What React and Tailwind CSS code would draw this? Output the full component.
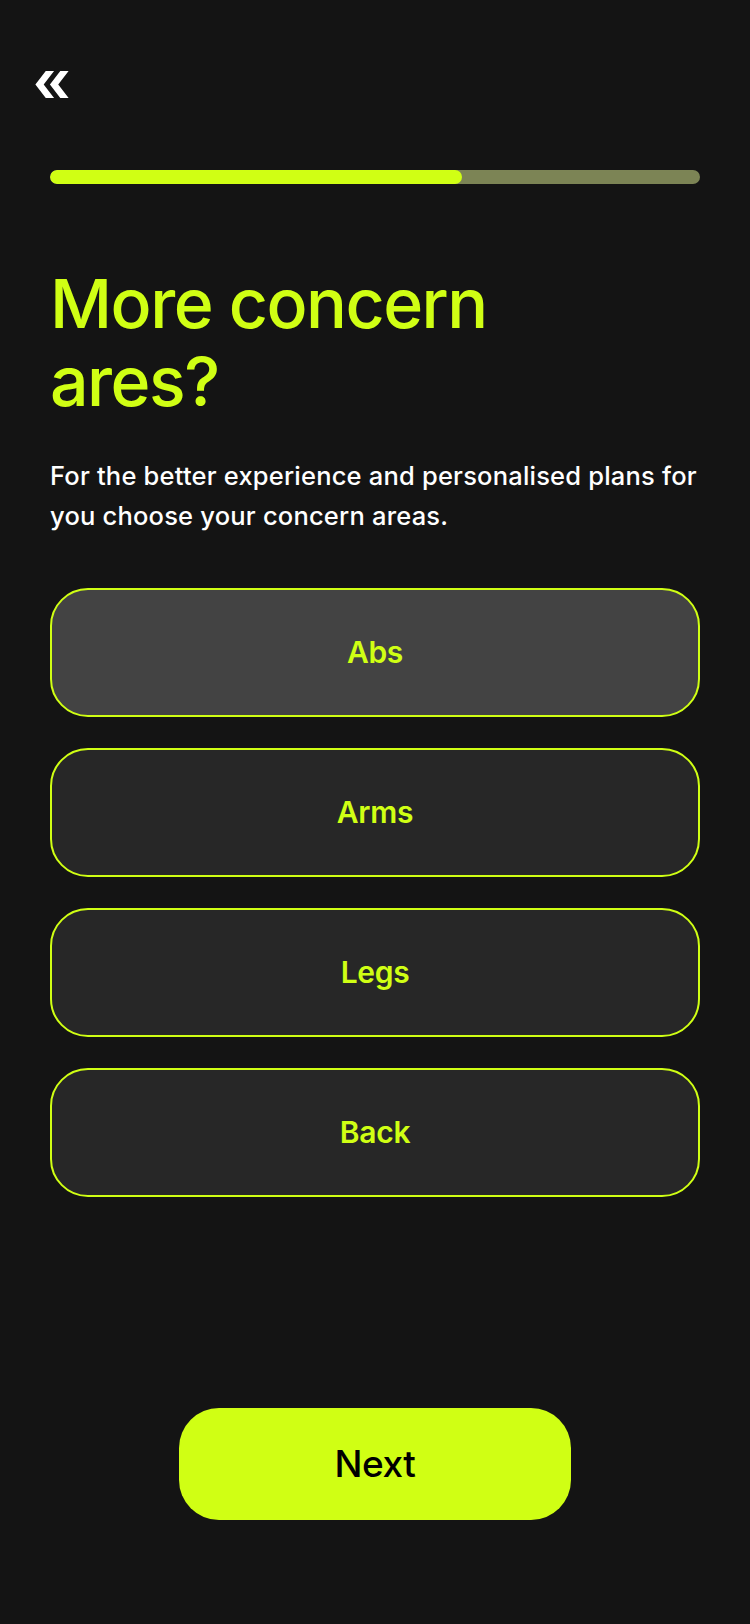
import React, { useState } from 'react'

const areas = ['Abs', 'Arms', 'Legs', 'Back']

function BackIcon() {
    return (
        <svg width="34" height="27" viewBox="0 0 32 26" fill="white">
            <polygon points="0,13 10,0 18,0 8,13 18,26 10,26" />
            <polygon points="14,13 24,0 32,0 22,13 32,26 24,26" />
        </svg>
    )
}

function App() {
    const [selected, setSelected] = useState('Abs')

    return (
        <div className="min-h-[1624px] w-full bg-[#141414] px-[50px] pt-[71px] pb-[104px] flex flex-col" style={{ fontFamily: 'Inter, "Noto Sans", sans-serif' }}>
            <button className="-ml-[15px] h-[27px] w-[34px] flex items-center">
                <BackIcon />
            </button>

            <div className="mt-[72px] h-[14px] w-full rounded-full bg-[#7c8455] overflow-hidden">
                <div className="h-full w-[412px] rounded-full bg-[#d0ff14]" />
            </div>

            <h1 className="mt-[80px] text-[68px] leading-[78px] font-medium tracking-[-1.5px] text-[#d0ff14]">
                More concern<br />ares?
            </h1>

            <p className="mt-[36px] text-[25.5px] leading-[40px] font-medium tracking-[0.2px] text-white">
                For the better experience and personalised plans for you choose your concern areas.
            </p>

            <div className="mt-[52px] flex flex-col gap-[31px]">
                {areas.map((area) => (
                    <button
                        key={area}
                        onClick={() => setSelected(area)}
                        className={`h-[129px] w-full rounded-[38px] border-2 border-[#d0ff14] text-[30px] font-semibold tracking-[-0.3px] text-[#d0ff14] ${selected === area ? 'bg-[#434343]' : 'bg-[#272727]'}`}
                    >
                        {area}
                    </button>
                ))}
            </div>

            <div className="mt-auto flex justify-center">
                <button className="h-[112px] w-[392px] rounded-[40px] bg-[#d0ff14] text-[37px] font-medium tracking-[-0.5px] text-black">
                    Next
                </button>
            </div>
        </div>
    )
}

export default App
